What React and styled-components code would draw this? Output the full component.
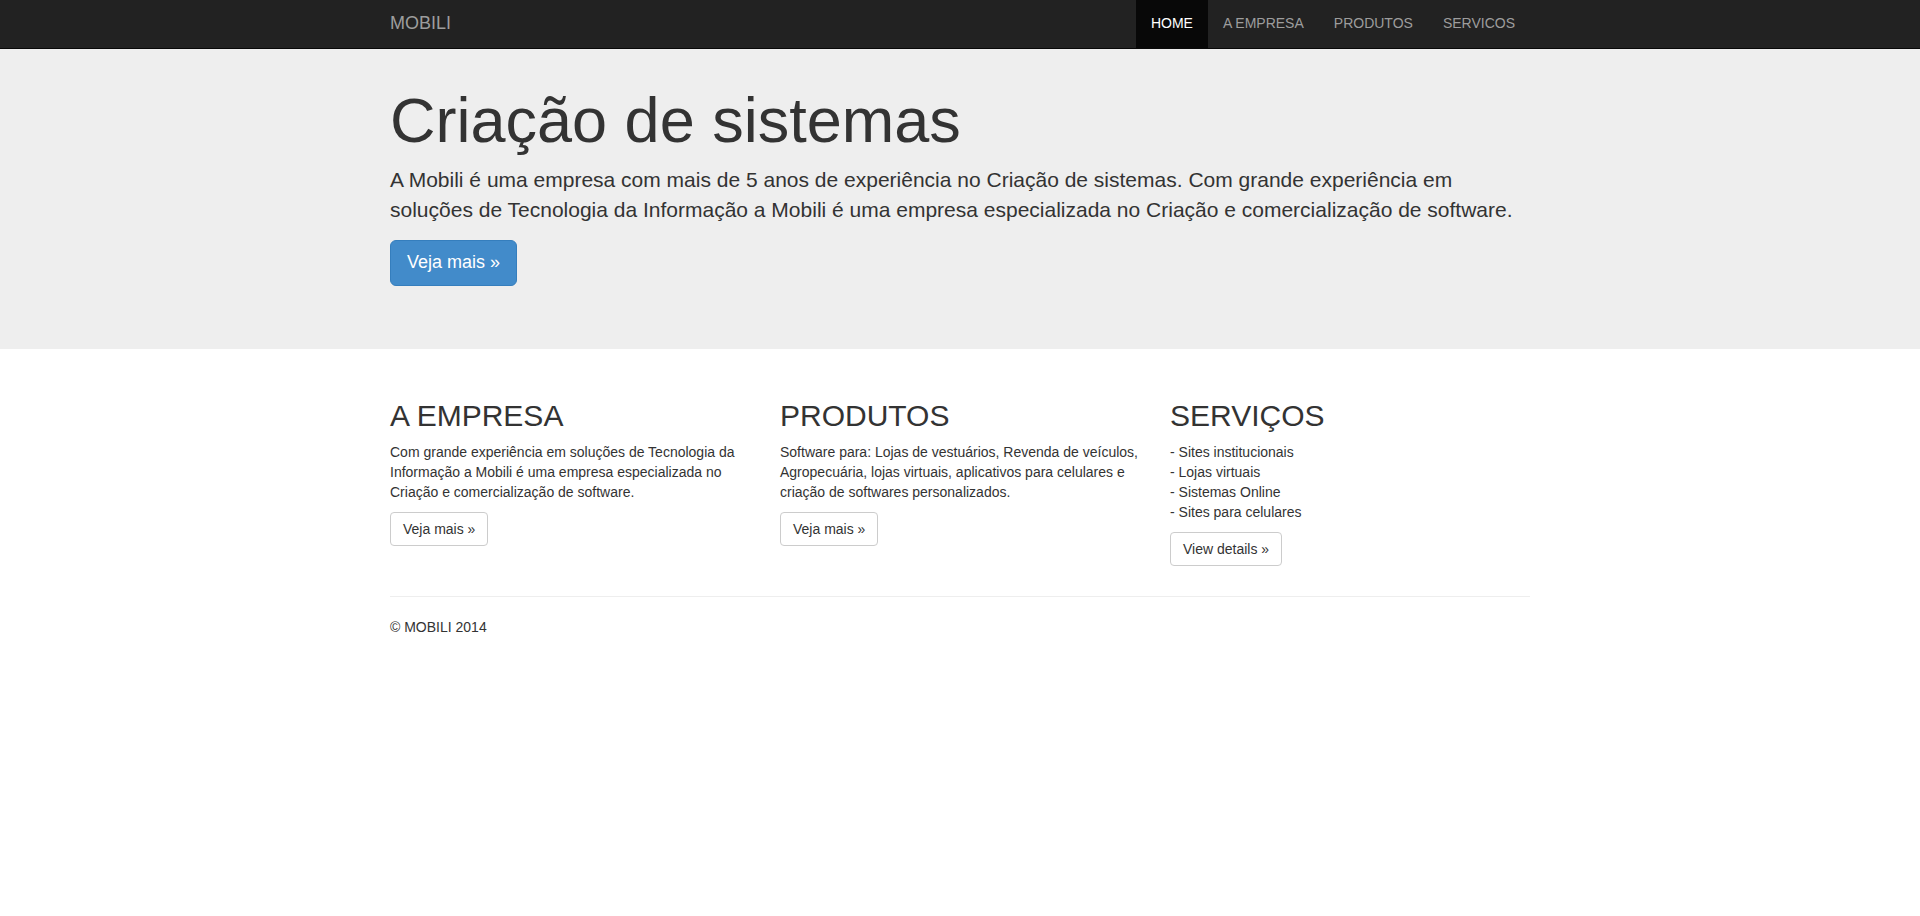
import styled, { createGlobalStyle } from "styled-components";

const GlobalStyle = createGlobalStyle`
  body {
    margin: 0;
    font-family: "Liberation Sans", Arial, Helvetica, sans-serif;
    font-size: 14px;
    line-height: 1.428571429;
    color: #333;
    background: #fff;
  }
  * {
    box-sizing: border-box;
  }
`;

const navItems = ["HOME", "A EMPRESA", "PRODUTOS", "SERVICOS"];

const columns = [
  {
    title: "A EMPRESA",
    lines: [
      "Com grande experiência em soluções de Tecnologia da Informação a Mobili é uma empresa especializada no Criação e comercialização de software.",
    ],
    button: "Veja mais »",
  },
  {
    title: "PRODUTOS",
    lines: [
      "Software para: Lojas de vestuários, Revenda de veículos, Agropecuária, lojas virtuais, aplicativos para celulares e criação de softwares personalizados.",
    ],
    button: "Veja mais »",
  },
  {
    title: "SERVIÇOS",
    lines: [
      "- Sites institucionais",
      "- Lojas virtuais",
      "- Sistemas Online",
      "- Sites para celulares",
    ],
    button: "View details »",
  },
];

const App = () => {
  return (
    <>
      <GlobalStyle />
      <Navbar>
        <NavContainer>
          <Brand href="#">MOBILI</Brand>
          <NavList>
            {navItems.map((item, i) => (
              <NavLink key={item} href="#" $active={i === 0}>
                {item}
              </NavLink>
            ))}
          </NavList>
        </NavContainer>
      </Navbar>

      <Jumbotron>
        <Container>
          <Headline>Criação de sistemas</Headline>
          <Lead>
            A Mobili é uma empresa com mais de 5 anos de experiência no Criação
            de sistemas. Com grande experiência em soluções de Tecnologia da
            Informação a Mobili é uma empresa especializada no Criação e
            comercialização de software.
          </Lead>
          <Lead>
            <PrimaryButton href="#">Veja mais »</PrimaryButton>
          </Lead>
        </Container>
      </Jumbotron>

      <Container>
        <Row>
          {columns.map((col) => (
            <Col key={col.title}>
              <ColTitle>{col.title}</ColTitle>
              <Text>
                {col.lines.map((line, i) => (
                  <span key={i}>
                    {line}
                    {i < col.lines.length - 1 && <br />}
                  </span>
                ))}
              </Text>
              <Text>
                <DefaultButton href="#">{col.button}</DefaultButton>
              </Text>
            </Col>
          ))}
        </Row>

        <Divider />

        <Footer>
          <Text>© MOBILI 2014</Text>
        </Footer>
      </Container>
    </>
  );
};

const Navbar = styled.nav`
  background-color: #222;
  border-bottom: 1px solid #080808;
  height: 49px;
`;

const Container = styled.div`
  width: 1170px;
  margin: 0 auto;
  padding: 0 15px;
`;

const NavContainer = styled(Container)`
  display: flex;
  justify-content: space-between;
  align-items: stretch;
  height: 48px;
`;

const Brand = styled.a`
  margin-left: -15px;
  padding: 13px 15px 15px;
  font-size: 18px;
  line-height: 20px;
  color: #9d9d9d;
  text-decoration: none;
`;

const NavList = styled.div`
  display: flex;
`;

const NavLink = styled.a`
  padding: 13px 15px 15px;
  font-size: 14px;
  line-height: 20px;
  text-decoration: none;
  color: ${(p) => (p.$active ? "#fff" : "#9d9d9d")};
  background-color: ${(p) => (p.$active ? "#080808" : "transparent")};
`;

const Jumbotron = styled.div`
  background-color: #eee;
  padding: 37px 0 48px;
  margin-bottom: 30px;
`;

const Headline = styled.h1`
  font-size: 63px;
  font-weight: 500;
  line-height: 1.1;
  margin: 0 0 10px;
  color: #333;
`;

const Lead = styled.p`
  font-size: 21px;
  font-weight: 200;
  line-height: 30px;
  margin: 0 0 15px;
`;

const PrimaryButton = styled.a`
  display: inline-block;
  padding: 10px 16px;
  font-size: 18px;
  line-height: 1.33;
  border-radius: 6px;
  color: #fff;
  background-color: #428bca;
  border: 1px solid #357ebd;
  text-decoration: none;
`;

const Row = styled.div`
  display: grid;
  grid-template-columns: repeat(3, 390px);
  margin: 0 -15px;
`;

const Col = styled.div`
  padding: 0 15px;
`;

const ColTitle = styled.h2`
  font-size: 30px;
  font-weight: 500;
  line-height: 1.1;
  margin: 20px 0 10px;
`;

const Text = styled.p`
  margin: 0 0 10px;
`;

const DefaultButton = styled.a`
  display: inline-block;
  padding: 6px 12px;
  font-size: 14px;
  line-height: 20px;
  border-radius: 4px;
  color: #333;
  background-color: #fff;
  border: 1px solid #ccc;
  text-decoration: none;
`;

const Divider = styled.hr`
  margin: 20px 0;
  border: 0;
  border-top: 1px solid #eee;
`;

const Footer = styled.footer`
  padding-bottom: 20px;
`;

export default App;
